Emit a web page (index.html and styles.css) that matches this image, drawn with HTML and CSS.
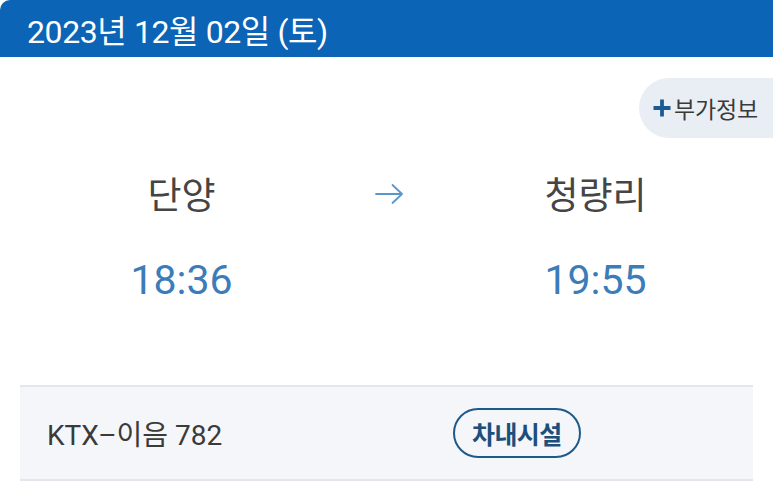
FILE: index.html
```html
<html lang="ko">
<head>
    <meta charset="UTF-8">
    <meta name="viewport" content="width=device-width, initial-scale=1.0">
    <link rel="stylesheet" href="styles.css">
    <title>승차권 정보</title>
</head>
<body>
    <div class="DateBar">2023년 12월 02일 (토)</div>
    <div class="ExtraRow">
        <button class="ExtraBtn">
            <svg class="PlusIcon" width="20" height="20" viewBox="0 0 20 20">
                <path d="M10 1.5V18.5M1.5 10H18.5" stroke="#1b5a94" stroke-width="3.8" fill="none"/>
            </svg>
            <span>부가정보</span>
        </button>
    </div>
    <div class="Route">
        <div class="Station">단양</div>
        <div class="ArrowCell">
            <svg width="30" height="24" viewBox="0 0 30 24">
                <path d="M2 12H28M18.5 3L28 12L18.5 21" stroke="#5a96cb" stroke-width="1.8" fill="none" stroke-linecap="round" stroke-linejoin="round"/>
            </svg>
        </div>
        <div class="Station">청량리</div>
        <div class="Time">18:36</div>
        <div></div>
        <div class="Time">19:55</div>
    </div>
    <div class="TrainPanel">
        <div class="TrainName">KTX–이음 782</div>
        <div>
            <button class="FacilityBtn">차내시설</button>
        </div>
    </div>
</body>
</html>
```

FILE: styles.css
```css
body{
    margin: 0;
    background-color: white;
    font-family: Roboto, 'Noto Sans CJK KR', sans-serif;
    width: 773px;
    height: 482px;
    overflow: hidden;
}
.DateBar{
    height: 57px;
    display: flex;
    align-items: center;
    padding-left: 27px;
    background-color: #0b64b5;
    border-top-left-radius: 10px;
    color: white;
    font-size: 32px;
    letter-spacing: -0.4px;
}
.ExtraRow{
    display: flex;
    justify-content: flex-end;
    margin-top: 21px;
}
.ExtraBtn{
    display: flex;
    align-items: center;
    gap: 2px;
    height: 60px;
    width: 134px;
    padding: 0 0 0 13px;
    border: none;
    border-radius: 30px 0 0 30px;
    background-color: #e9eef5;
    color: #3a3a3a;
    font-family: 'Noto Sans CJK KR', sans-serif;
    font-size: 23px;
    letter-spacing: -0.2px;
}
.PlusIcon{
    flex-shrink: 0;
}
.Route{
    display: grid;
    grid-template-columns: 207px 207px 207px;
    row-gap: 43px;
    padding-left: 78px;
    margin-top: 35px;
    text-align: center;
}
.Station{
    font-family: 'Noto Sans CJK KR', sans-serif;
    font-size: 37px;
    line-height: 40px;
    color: #454545;
}
.ArrowCell{
    display: flex;
    justify-content: center;
    align-items: center;
    padding-top: 2px;
}
.Time{
    font-size: 41px;
    line-height: 48px;
    color: #3b7cb9;
}
.TrainPanel{
    display: grid;
    grid-template-columns: 406px auto;
    align-items: center;
    margin: 81px 20px 0 20px;
    height: 92px;
    padding-left: 27px;
    background-color: #f4f6f9;
    border-top: 2px solid #e3e6ea;
    border-bottom: 2px solid #e3e6ea;
}
.TrainName{
    font-size: 28px;
    color: #3a3a3a;
    letter-spacing: 0;
}
.FacilityBtn{
    height: 50px;
    padding: 0 17px;
    border: 2px solid #1d5a8a;
    border-radius: 25px;
    background-color: transparent;
    color: #1d4f7c;
    font-family: 'Noto Sans CJK KR', sans-serif;
    font-weight: 600;
    font-size: 25px;
    letter-spacing: -0.6px;
}
```
